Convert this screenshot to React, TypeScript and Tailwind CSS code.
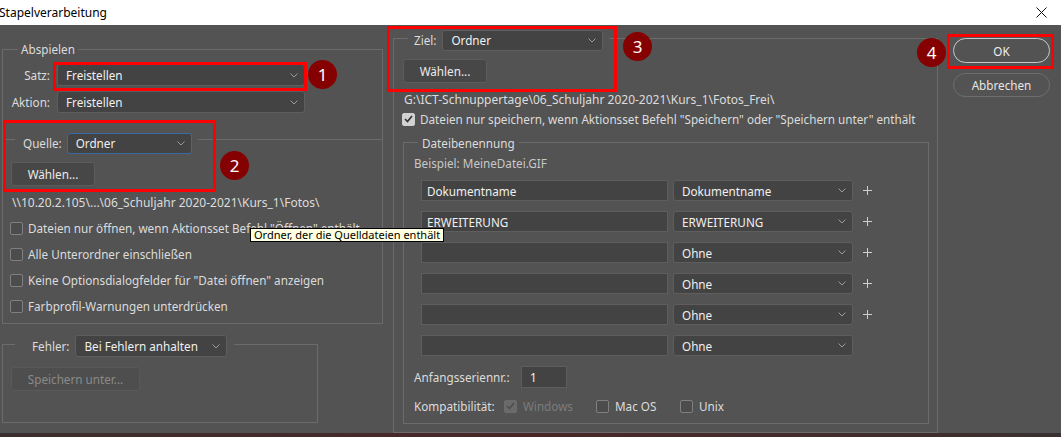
import React from "react";

function Chevron() {
  return (
    <svg width="8" height="5" viewBox="0 0 8 5" className="shrink-0">
      <path d="M0.5 0.5 L4 4 L7.5 0.5" fill="none" stroke="#9c9c9c" strokeWidth="1" />
    </svg>
  );
}

function Select({ text, className = "" }: { text: string; className?: string }) {
  return (
    <div
      className={`flex items-center justify-between rounded-[3px] border bg-[#434343] pl-[8px] pr-[6px] text-[#f0f0f0] ${className}`}
    >
      <span className="whitespace-nowrap">{text}</span>
      <Chevron />
    </div>
  );
}

function Button({ text, className = "", disabled }: { text: string; className?: string; disabled?: boolean }) {
  return (
    <div
      className={`flex items-center justify-center rounded-[3px] border ${
        disabled ? "border-[#595959] bg-[#4e4e4e] text-[#8a8a8a]" : "border-[#5c5c5c] bg-[#474747] text-[#ececec]"
      } ${className}`}
    >
      {text}
    </div>
  );
}

function Check({ checked, disabled }: { checked?: boolean; disabled?: boolean }) {
  const box = checked
    ? disabled
      ? "border-[#6c6c6c] bg-[#6a6a6a]"
      : "border-[#cfcfcf] bg-[#d2d2d2]"
    : "border-[#808080] bg-[#4c4c4c]";
  return (
    <span className={`flex h-[13px] w-[13px] shrink-0 items-center justify-center rounded-[2px] border ${box}`}>
      {checked && (
        <svg width="9" height="8" viewBox="0 0 9 8">
          <path d="M1 4 L3.5 6.5 L8 1" fill="none" stroke={disabled ? "#505050" : "#333333"} strokeWidth="1.7" />
        </svg>
      )}
    </span>
  );
}

function Plus() {
  return (
    <svg width="9" height="9" viewBox="0 0 9 9" className="ml-[10px]">
      <path d="M4.5 0 V9 M0 4.5 H9" stroke="#cfcfcf" strokeWidth="1" />
    </svg>
  );
}

function Badge({ n, className }: { n: number; className: string }) {
  return (
    <div
      className={`absolute flex h-[29px] w-[29px] items-center justify-center rounded-full bg-[#850000] text-[17px] text-white ${className}`}
    >
      {n}
    </div>
  );
}

const naming = [
  { input: "Dokumentname", sel: "Dokumentname", plus: true },
  { input: "ERWEITERUNG", sel: "ERWEITERUNG", plus: true },
  { input: "", sel: "Ohne", plus: true },
  { input: "", sel: "Ohne", plus: true },
  { input: "", sel: "Ohne", plus: true },
  { input: "", sel: "Ohne", plus: false },
];

const sourceOptions = [
  'Dateien nur öffnen, wenn Aktionsset Befehl "Öffnen" enthält',
  "Alle Unterordner einschließen",
  'Keine Optionsdialogfelder für "Datei öffnen" anzeigen',
  "Farbprofil-Warnungen unterdrücken",
];

export default function App() {
  return (
    <div className="relative h-[437px] w-[1061px] overflow-hidden bg-[#535353] font-['Noto_Sans','Liberation_Sans',sans-serif] text-[11.7px] leading-[16px] text-[#dcdcdc]">
      {/* title bar */}
      <div className="flex h-[25px] items-center justify-between bg-white pr-[14px] text-[12px] text-black">
        <span className="-ml-[1px]">Stapelverarbeitung</span>
        <svg width="11" height="11" viewBox="0 0 11 11">
          <path d="M0.5 0.5 L10.5 10.5 M10.5 0.5 L0.5 10.5" stroke="#111" strokeWidth="1" />
        </svg>
      </div>

      <div className="flex h-[408px]">
        {/* left column */}
        <div className="w-[385px] shrink-0 pl-[2px]">
          <div className="mt-[24px] w-[381px] border-x border-t border-[#6b6b6b] pb-[26px]">
            <div className="-mt-[9px] ml-[15px] w-fit bg-[#535353] px-[3px]">Abspielen</div>
            <div className="mt-[7px] flex items-center">
              <span className="w-[47px] text-right">Satz:</span>
              <Select text="Freistellen" className="ml-[7px] h-[22px] w-[248px] border-[#5e5e5e]" />
            </div>
            <div className="mt-[5px] flex items-center">
              <span className="w-[47px] text-right">Aktion:</span>
              <Select text="Freistellen" className="ml-[7px] h-[22px] w-[248px] border-[#5e5e5e]" />
            </div>
          </div>

          <div className="w-[381px] border border-[#6b6b6b] pb-[4px]">
            <div className="-mt-[8px] ml-[12px] flex h-[22px] w-fit items-center bg-[#535353] pl-[8px] pr-[6px]">
              <span>Quelle:</span>
              <Select text="Ordner" className="ml-[5px] h-[21px] w-[125px] border-[#3a6aa3]" />
            </div>
            <Button text="Wählen..." className="ml-[8px] mt-[8px] h-[24px] w-[84px]" />
            <div className="ml-[9px] mt-[9px] whitespace-nowrap text-[12px]">
              \\10.20.2.105\...\06_Schuljahr 2020-2021\Kurs_1\Fotos\
            </div>
            <div className="mt-[4px]">
              {sourceOptions.map((t) => (
                <div key={t} className="flex h-[26px] items-center gap-[5px] pl-[7px]">
                  <Check />
                  <span className="whitespace-nowrap">{t}</span>
                </div>
              ))}
            </div>
          </div>

          <div className="mt-[20px] w-[316px] border border-[#6b6b6b] pb-[31px]">
            <div className="-mt-[10px] ml-[12px] flex h-[22px] w-fit items-center bg-[#535353] pl-[17px] pr-[7px]">
              <span>Fehler:</span>
              <Select text="Bei Fehlern anhalten" className="ml-[6px] h-[22px] w-[152px] border-[#5e5e5e]" />
            </div>
            <Button text="Speichern unter..." disabled className="ml-[8px] mt-[10px] h-[24px] w-[129px]" />
          </div>
        </div>

        {/* middle column */}
        <div className="ml-[8px] w-[545px] shrink-0">
          <div className="mt-[13px] border border-[#6b6b6b] pb-[8px]">
            <div className="-mt-[10px] ml-[14px] flex h-[22px] w-fit items-center bg-[#535353] pl-[6px] pr-[6px]">
              <span>Ziel:</span>
              <Select text="Ordner" className="ml-[6px] h-[21px] w-[161px] border-[#5e5e5e]" />
            </div>
            <Button text="Wählen..." className="ml-[9px] mt-[8px] h-[24px] w-[84px]" />
            <div className="ml-[10px] mt-[9px] whitespace-nowrap text-[12px]">
              G:\ICT-Schnuppertage\06_Schuljahr 2020-2021\Kurs_1\Fotos_Frei\
            </div>
            <div className="ml-[8px] mt-[3px] flex h-[16px] items-center gap-[5px]">
              <Check checked />
              <span className="whitespace-nowrap">
                Dateien nur speichern, wenn Aktionsset Befehl "Speichern" oder "Speichern unter" enthält
              </span>
            </div>

            <div className="ml-[9px] mt-[15px] w-[526px] border border-[#6b6b6b] pb-[9px]">
              <div className="-mt-[8px] ml-[14px] w-fit bg-[#535353] px-[4px]">Dateibenennung</div>
              <div className="ml-[10px] mt-[4px] text-[#c8c8c8]">Beispiel: MeineDatei.GIF</div>
              <div className="mt-[9px] flex flex-col gap-[10px]">
                {naming.map((r, i) => (
                  <div key={i} className="ml-[17px] flex h-[21px] items-center">
                    <div className="flex h-[21px] w-[247px] items-center border border-[#5e5e5e] bg-[#434343] pl-[5px] text-[#f0f0f0]">
                      {r.input}
                    </div>
                    <Select text={r.sel} className="ml-[5px] h-[21px] w-[180px] border-[#5e5e5e]" />
                    {r.plus && <Plus />}
                  </div>
                ))}
              </div>
              <div className="ml-[10px] mt-[10px] flex items-center">
                <span className="w-[107px]">Anfangsseriennr.:</span>
                <div className="flex h-[22px] w-[46px] items-center border border-[#5e5e5e] bg-[#434343] pl-[8px] text-[#f0f0f0]">
                  1
                </div>
              </div>
              <div className="ml-[10px] mt-[10px] flex h-[16px] items-center">
                <span className="w-[90px]">Kompatibilität:</span>
                <div className="flex w-[92px] items-center gap-[6px] text-[#7c7c7c]">
                  <Check checked disabled />
                  <span>Windows</span>
                </div>
                <div className="flex w-[84px] items-center gap-[6px]">
                  <Check />
                  <span>Mac OS</span>
                </div>
                <div className="flex items-center gap-[6px]">
                  <Check />
                  <span>Unix</span>
                </div>
              </div>
            </div>
          </div>
        </div>

        {/* right column */}
        <div className="ml-[15px] flex flex-col">
          <div className="mt-[13px] flex h-[25px] w-[97px] items-center justify-center rounded-full border border-[#c8c8c8] text-[#f0f0f0]">
            OK
          </div>
          <div className="mt-[10px] flex h-[24px] w-[97px] items-center justify-center rounded-full border border-[#6e6e6e] text-[#e6e6e6]">
            Abbrechen
          </div>
        </div>
      </div>

      <div className="h-[4px] bg-gradient-to-r from-[#3a2e2e] via-[#4a2626] to-[#3a3030]" />

      {/* tooltip */}
      <div className="absolute left-[250px] top-[228px] flex h-[14px] items-center whitespace-nowrap border border-black bg-[#ffffe1] px-[3px] text-[11px] leading-[12px] text-black">
        Ordner, der die Quelldateien enthält
      </div>

      {/* annotation frames */}
      <div className="absolute left-[53px] top-[62px] h-[29px] w-[254px] border-[3px] border-[#ff0000]" />
      <div className="absolute left-[3px] top-[120px] h-[72px] w-[213px] border-[3px] border-[#ff0000]" />
      <div className="absolute left-[387px] top-[26px] h-[66px] w-[230px] border-[3px] border-[#ff0000]" />
      <div className="absolute left-[947px] top-[34px] h-[35px] w-[107px] border-[3px] border-[#ff0000]" />
      <Badge n={1} className="left-[308px] top-[60px]" />
      <Badge n={2} className="left-[220px] top-[151px]" />
      <Badge n={3} className="left-[623px] top-[32px]" />
      <Badge n={4} className="left-[917px] top-[38px]" />
    </div>
  );
}
